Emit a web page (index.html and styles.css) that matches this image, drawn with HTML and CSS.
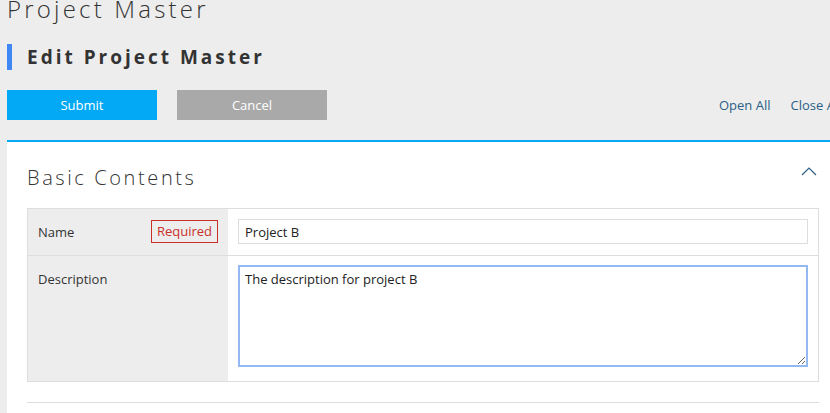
FILE: index.html
```html
<!DOCTYPE html>
<html>
<head>
<meta charset="utf-8">
<link rel="stylesheet" href="styles.css">
</head>
<body>
<div class="page">
  <h1 class="title">Project Master</h1>
  <h2 class="subtitle">Edit Project Master</h2>
  <div class="toolbar">
    <button class="btn btn-submit">Submit</button>
    <button class="btn btn-cancel">Cancel</button>
    <div class="links">
      <a class="link">Open All</a>
      <a class="link">Close All</a>
    </div>
  </div>
  <div class="panel">
    <div class="panel-head">
      <span class="panel-title">Basic Contents</span>
      <svg class="chevron" width="16" height="10" viewBox="0 0 16 10"><path d="M1 9 L8 2 L15 9" fill="none" stroke="#2b5f86" stroke-width="1.2"/></svg>
    </div>
    <div class="form">
      <div class="row">
        <div class="label"><span>Name</span><span class="req">Required</span></div>
        <div class="field"><input class="input" type="text" value="Project B"></div>
      </div>
      <div class="row">
        <div class="label"><span>Description</span></div>
        <div class="field field-tall"><textarea class="textarea">The description for project B</textarea></div>
      </div>
    </div>
    <div class="sep"></div>
  </div>
</div>
</body>
</html>
```
FILE: styles.css
```css
html, body {
  margin: 0;
  padding: 0;
  background: #ededed;
  overflow: hidden;
  font-family: "Open Sans", "Noto Sans", sans-serif;
  color: #333;
}
.page {
  width: 832px;
  padding-left: 7px;
}
.title {
  margin: -6px 0 0 0;
  font-size: 24px;
  line-height: 30px;
  font-weight: 300;
  letter-spacing: 3.2px;
  color: #333;
}
.subtitle {
  margin: 20px 0 0 0;
  height: 26px;
  line-height: 26px;
  border-left: 5px solid #3f87f5;
  padding-left: 15px;
  font-size: 19px;
  font-weight: 700;
  letter-spacing: 3px;
  color: #333;
}
.toolbar {
  display: flex;
  align-items: center;
  gap: 20px;
  margin-top: 20px;
  height: 30px;
}
.btn {
  width: 150px;
  height: 30px;
  border: none;
  color: #fff;
  font-family: inherit;
  font-size: 13px;
  padding: 0;
}
.btn-submit { background: #03a9f4; }
.btn-cancel { background: #a9a9a9; }
.links {
  margin-left: auto;
  display: flex;
  gap: 20px;
  width: 120px;
  white-space: nowrap;
}
.link {
  font-size: 13px;
  color: #2b5f86;
}
.panel {
  margin-top: 20px;
  background: #fff;
  border-top: 2px solid #03a9f4;
  padding: 0 20px 20px 20px;
}
.panel-head {
  display: flex;
  align-items: center;
  justify-content: space-between;
  height: 66px;
}
.panel-title {
  font-size: 20px;
  font-weight: 300;
  letter-spacing: 2.6px;
  color: #333;
  margin-top: 4px;
}
.chevron {
  margin-right: 2px;
  margin-top: -8px;
}
.form {
  border: 1px solid #ddd;
}
.row {
  display: flex;
}
.row + .row {
  border-top: 1px solid #ddd;
}
.label {
  width: 180px;
  background: #ededed;
  padding: 11px 10px;
  display: flex;
  justify-content: space-between;
  align-items: flex-start;
  font-size: 13px;
  line-height: 24px;
}
.req {
  border: 1px solid #c9302c;
  color: #c9302c;
  padding: 0 5px;
  line-height: 21px;
}
.field {
  flex: 1;
  padding: 10px 10px 11px 10px;
}
.field-tall {
  padding-top: 9px;
  padding-bottom: 14px;
}
.input {
  box-sizing: border-box;
  width: 100%;
  height: 25px;
  border: 1px solid #ddd;
  padding: 0 6px;
  font-family: inherit;
  font-size: 13px;
  color: #222;
  display: block;
}
.textarea {
  box-sizing: border-box;
  width: 100%;
  height: 102px;
  border: 2px solid #94b9f2;
  padding: 3px 5px;
  font-family: inherit;
  font-size: 13px;
  color: #222;
  display: block;
  resize: vertical;
  outline: none;
}
.sep {
  border-top: 1px solid #ddd;
  margin-top: 20px;
}
```
